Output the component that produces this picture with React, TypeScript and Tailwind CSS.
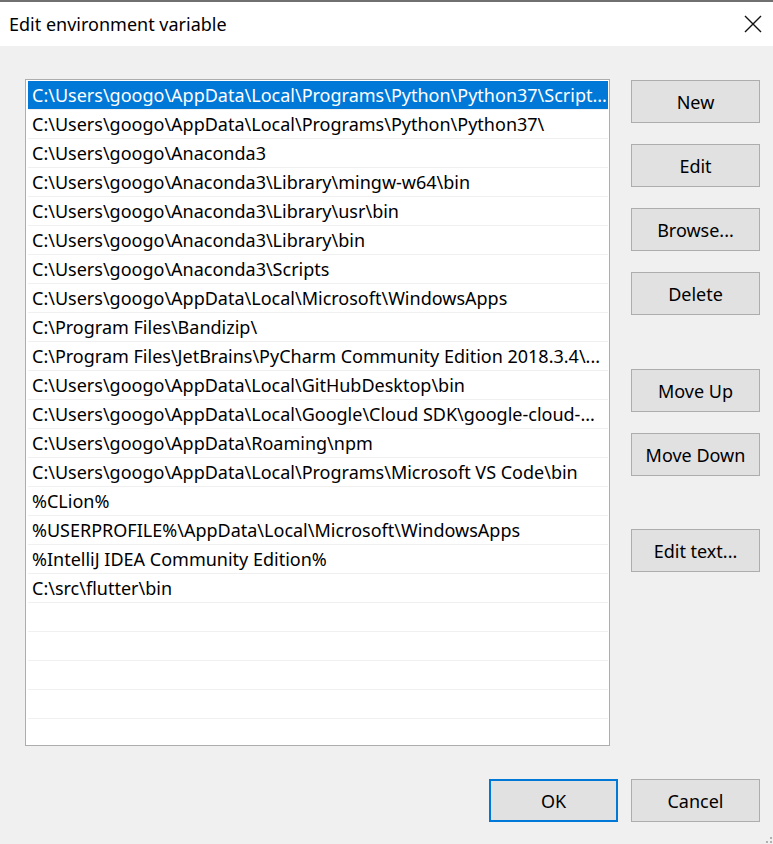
import React from "react";

const paths = [
  "C:\\Users\\googo\\AppData\\Local\\Programs\\Python\\Python37\\Script...",
  "C:\\Users\\googo\\AppData\\Local\\Programs\\Python\\Python37\\",
  "C:\\Users\\googo\\Anaconda3",
  "C:\\Users\\googo\\Anaconda3\\Library\\mingw-w64\\bin",
  "C:\\Users\\googo\\Anaconda3\\Library\\usr\\bin",
  "C:\\Users\\googo\\Anaconda3\\Library\\bin",
  "C:\\Users\\googo\\Anaconda3\\Scripts",
  "C:\\Users\\googo\\AppData\\Local\\Microsoft\\WindowsApps",
  "C:\\Program Files\\Bandizip\\",
  "C:\\Program Files\\JetBrains\\PyCharm Community Edition 2018.3.4\\...",
  "C:\\Users\\googo\\AppData\\Local\\GitHubDesktop\\bin",
  "C:\\Users\\googo\\AppData\\Local\\Google\\Cloud SDK\\google-cloud-...",
  "C:\\Users\\googo\\AppData\\Roaming\\npm",
  "C:\\Users\\googo\\AppData\\Local\\Programs\\Microsoft VS Code\\bin",
  "%CLion%",
  "%USERPROFILE%\\AppData\\Local\\Microsoft\\WindowsApps",
  "%IntelliJ IDEA Community Edition%",
  "C:\\src\\flutter\\bin",
  "",
  "",
  "",
  "",
  "",
  "",
];

function WinButton({
  label,
  className = "",
  primary = false,
}: {
  label: string;
  className?: string;
  primary?: boolean;
}) {
  return (
    <button
      className={
        "w-[129px] h-[43px] shrink-0 bg-[#e1e1e1] text-[18px] text-black flex items-center justify-center pt-[1px] " +
        (primary ? "border-2 border-[#0078d7] " : "border border-[#adadad] ") +
        className
      }
    >
      {label}
    </button>
  );
}

export default function App() {
  return (
    <div
      className="w-[773px] h-[844px] flex flex-col bg-[#f0f0f0] border-t-2 border-[#707070] overflow-hidden relative"
      style={{ fontFamily: '"Noto Sans", "Open Sans", sans-serif' }}
    >
      {/* Title bar */}
      <div className="h-[44px] bg-white flex items-center justify-between pl-[9px] pr-[10px] shrink-0">
        <span className="text-[18px] text-black leading-none">
          Edit environment variable
        </span>
        <svg width="18" height="18" viewBox="0 0 18 18" className="mr-[1px]">
          <path d="M1 1 L17 17 M17 1 L1 17" stroke="#111" strokeWidth="1.4" />
        </svg>
      </div>

      {/* Body */}
      <div className="flex flex-col grow pl-[25px] pr-[13px] pt-[33px]">
        <div className="flex gap-[21px]">
          {/* List box */}
          <div className="w-[585px] h-[667px] shrink-0 bg-white border border-[#adadad] p-[1px] pl-[2px] overflow-hidden">
            {paths.map((p, i) => (
              <div
                key={i}
                className={
                  "h-[29px] flex items-center pl-[4px] pt-[1px] text-[18px] border-b border-[#f0f0f0] whitespace-nowrap overflow-hidden " +
                  (i === 0 ? "bg-[#0078d7] text-white" : "text-black")
                }
              >
                {p}
              </div>
            ))}
          </div>

          {/* Side buttons */}
          <div className="flex flex-col">
            <WinButton label="New" className="mt-[1px]" />
            <WinButton label="Edit" className="mt-[21px]" />
            <WinButton label="Browse..." className="mt-[21px]" />
            <WinButton label="Delete" className="mt-[21px]" />
            <WinButton label="Move Up" className="mt-[54px]" />
            <WinButton label="Move Down" className="mt-[21px]" />
            <WinButton label="Edit text..." className="mt-[53px]" />
          </div>
        </div>

        {/* Bottom buttons */}
        <div className="flex justify-end gap-[13px] mt-[33px]">
          <WinButton label="OK" primary />
          <WinButton label="Cancel" />
        </div>
      </div>

      {/* Resize grip */}
      <div className="absolute right-[1px] bottom-[1px] w-[10px] h-[10px]">
        <div className="absolute right-0 bottom-0 w-[2px] h-[2px] bg-[#b0b0b0]" />
        <div className="absolute right-[4px] bottom-0 w-[2px] h-[2px] bg-[#b0b0b0]" />
        <div className="absolute right-0 bottom-[4px] w-[2px] h-[2px] bg-[#b0b0b0]" />
      </div>
    </div>
  );
}
